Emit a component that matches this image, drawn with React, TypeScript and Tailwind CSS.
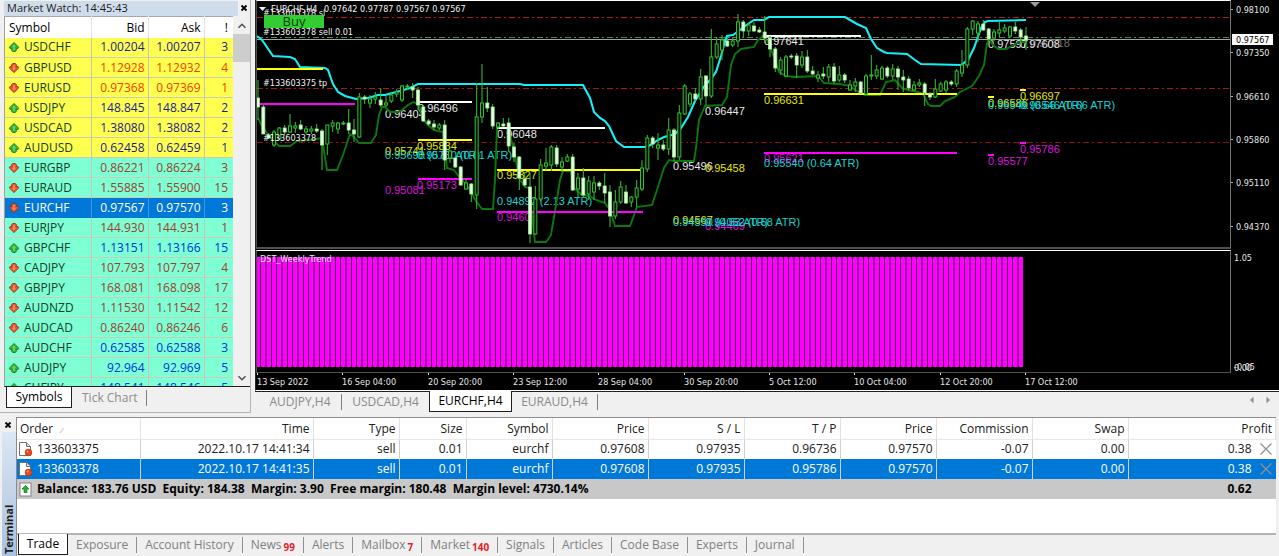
import { clsx } from 'clsx'

type Quote = { symbol: string; bid: string; ask: string; spread: number; up: boolean; group: 'major' | 'cross' }

const q = (symbol: string, bid: string, ask: string, spread: number, up: boolean, group: Quote['group'] = 'cross'): Quote => ({
  symbol,
  bid,
  ask,
  spread,
  up,
  group,
})

const quotes: Quote[] = [
  q('USDCHF', '1.00204', '1.00207', 3, true, 'major'),
  q('GBPUSD', '1.12928', '1.12932', 4, false, 'major'),
  q('EURUSD', '0.97368', '0.97369', 1, false, 'major'),
  q('USDJPY', '148.845', '148.847', 2, true, 'major'),
  q('USDCAD', '1.38080', '1.38082', 2, true, 'major'),
  q('AUDUSD', '0.62458', '0.62459', 1, true, 'major'),
  q('EURGBP', '0.86221', '0.86224', 3, false),
  q('EURAUD', '1.55885', '1.55900', 15, false),
  q('EURCHF', '0.97567', '0.97570', 3, false),
  q('EURJPY', '144.930', '144.931', 1, false),
  q('GBPCHF', '1.13151', '1.13166', 15, true),
  q('CADJPY', '107.793', '107.797', 4, false),
  q('GBPJPY', '168.081', '168.098', 17, false),
  q('AUDNZD', '1.11530', '1.11542', 12, false),
  q('AUDCAD', '0.86240', '0.86246', 6, false),
  q('AUDCHF', '0.62585', '0.62588', 3, true),
  q('AUDJPY', '92.964', '92.969', 5, true),
  q('CHFJPY', '148.541', '148.546', 5, true),
]

// [filled, body top, body bottom, high, low], one entry per H4 bar
const candles: [0 | 1, number, number, number, number][] = [
  [1, 98, 107, 80, 120], [1, 107, 134, 105, 134], [1, 135, 138, 133, 139], [0, 132, 145, 130, 147],
  [0, 128, 139, 127, 140], [1, 128, 132, 125, 135], [0, 126, 132, 114, 133], [0, 126, 128, 122, 133],
  [1, 125, 129, 120, 130], [0, 129, 132, 126, 134], [0, 129, 131, 126, 134], [1, 129, 131, 124, 133],
  [1, 131, 145, 129, 170], [0, 125, 144, 125, 155], [0, 123, 126, 120, 132], [0, 123, 129, 122, 134],
  [0, 123, 124, 121, 125], [1, 123, 130, 109, 134], [1, 130, 134, 119, 142], [0, 97, 137, 93, 138],
  [1, 97, 99, 95, 104], [0, 99, 103, 95, 108], [0, 97, 99, 92, 104], [1, 100, 105, 88, 107],
  [0, 103, 105, 96, 107], [0, 95, 101, 93, 103], [0, 92, 94, 89, 97], [0, 86, 100, 85, 102],
  [0, 86, 87, 84, 90], [1, 87, 90, 83, 98], [1, 90, 105, 87, 110], [1, 107, 121, 105, 122],
  [1, 121, 124, 119, 126], [1, 124, 127, 120, 130], [0, 125, 128, 123, 130], [1, 125, 160, 120, 170],
  [0, 151, 158, 150, 163], [1, 158, 167, 157, 168], [1, 167, 185, 166, 186], [0, 183, 189, 178, 190],
  [1, 184, 194, 183, 202], [0, 117, 195, 83, 209], [0, 103, 117, 64, 123], [1, 103, 108, 87, 112],
  [1, 107, 126, 104, 129], [0, 123, 127, 122, 129], [1, 124, 126, 118, 127], [1, 123, 146, 118, 152],
  [1, 147, 157, 143, 162], [1, 157, 178, 156, 190], [1, 179, 185, 172, 187], [1, 187, 234, 173, 243],
  [0, 199, 234, 186, 235], [0, 165, 199, 159, 201], [0, 163, 166, 148, 170], [0, 147, 165, 145, 171],
  [1, 148, 164, 145, 167], [0, 162, 167, 157, 172], [0, 157, 161, 154, 162], [1, 157, 190, 154, 191],
  [0, 178, 189, 173, 197], [1, 178, 195, 168, 198], [0, 181, 194, 176, 200], [0, 183, 192, 176, 200],
  [1, 183, 186, 181, 190], [1, 186, 193, 173, 203], [1, 192, 216, 185, 227], [0, 202, 216, 190, 219],
  [0, 187, 202, 181, 204], [1, 192, 203, 185, 204], [0, 197, 202, 196, 207], [0, 188, 197, 180, 207],
  [0, 168, 189, 160, 191], [0, 138, 169, 135, 172], [1, 138, 144, 136, 148], [0, 145, 148, 133, 160],
  [1, 145, 149, 140, 151], [0, 130, 149, 118, 155], [1, 130, 157, 128, 161], [0, 113, 157, 105, 160],
  [0, 86, 114, 84, 115], [0, 94, 104, 92, 107], [1, 94, 99, 88, 101], [0, 77, 99, 69, 105],
  [1, 76, 96, 75, 105], [0, 57, 96, 29, 98], [0, 44, 57, 37, 59], [0, 40, 50, 35, 60],
  [1, 41, 46, 38, 47], [0, 41, 45, 37, 47], [0, 22, 41, 14, 47], [1, 22, 31, 20, 37],
  [0, 25, 31, 23, 36], [1, 26, 31, 22, 32], [1, 30, 32, 27, 33], [1, 32, 38, 16, 43],
  [1, 38, 49, 36, 57], [1, 49, 68, 47, 72], [0, 60, 70, 57, 75], [0, 57, 76, 55, 77],
  [1, 56, 57, 54, 59], [1, 56, 65, 53, 78], [0, 57, 65, 51, 68], [1, 57, 71, 50, 73],
  [1, 71, 74, 66, 75], [0, 75, 78, 71, 82], [1, 74, 76, 67, 79], [0, 67, 77, 64, 82],
  [1, 67, 81, 63, 84], [0, 75, 80, 66, 82], [1, 75, 80, 73, 83], [0, 85, 90, 80, 91],
  [0, 82, 86, 78, 92], [1, 82, 93, 81, 94], [0, 76, 94, 74, 95], [0, 75, 76, 55, 80],
  [0, 70, 76, 65, 79], [0, 68, 79, 66, 80], [1, 68, 76, 66, 78], [0, 69, 76, 64, 80],
  [1, 69, 77, 66, 90], [1, 77, 80, 70, 92], [1, 79, 88, 76, 91], [0, 85, 90, 81, 91],
  [0, 83, 85, 79, 87], [1, 84, 93, 82, 106], [1, 94, 97, 92, 100], [0, 89, 97, 79, 98],
  [0, 84, 91, 82, 92], [0, 82, 90, 80, 93], [1, 82, 84, 80, 86], [0, 71, 84, 69, 87],
  [0, 65, 73, 50, 77], [0, 29, 65, 27, 68], [0, 21, 29, 20, 35], [0, 24, 33, 21, 42],
  [1, 24, 30, 20, 31], [1, 29, 39, 28, 42], [0, 32, 38, 29, 41], [0, 30, 33, 22, 37],
  [0, 28, 31, 24, 33], [0, 27, 36, 26, 38], [1, 27, 31, 22, 34], [1, 30, 37, 28, 45],
  [1, 36, 40, 27, 50],
]

const barX = (i: number) => 1 + (i * 16) / 3

const upperBand =
  '0,36 5,40 16,56 33,57 38,59 43,67 68,68 71,70 76,84 81,92 88,96 99,99 111,98 121,95 128,95 143,91 153,88 161,84 263,84 267,85 326,85 333,98 337,112 343,118 348,121 352,126 359,141 367,147 390,147 395,144 401,140 407,137 418,134 424,128 431,117 438,101 446,88 453,80 459,72 464,56 468,41 470,36 476,35 483,30 488,26 497,20 507,20 512,17 588,17 593,20 600,24 609,28 614,39 620,48 627,52 630,53 650,54 658,60 664,64 704,65 711,60 717,48 724,28 728,22 731,21 769,20'

const lowerBand =
  '1,118 5,126 13,137 22,146 33,146 40,141 53,140 65,138 70,170 80,170 86,155 93,134 97,137 102,143 114,143 119,135 122,115 125,107 128,107 133,112 141,112 145,110 151,105 156,102 162,104 165,118 171,125 177,130 186,132 190,168 197,170 203,178 209,184 213,190 219,201 225,209 236,209 238,180 240,128 250,128 253,135 258,155 262,178 268,187 272,188 275,215 278,242 289,242 294,235 299,205 303,180 306,171 314,171 317,188 325,195 333,196 339,200 348,203 353,210 358,226 373,226 377,215 380,207 395,205 400,190 407,168 412,160 417,161 437,161 439,148 442,120 448,106 465,105 470,97 474,65 478,54 484,49 497,47 501,40 506,36 511,42 517,57 522,72 529,76 538,77 561,76 567,83 583,84 593,86 598,90 608,95 623,95 629,82 638,80 646,89 661,92 666,94 671,104 674,106 683,106 688,101 698,97 703,92 715,86 722,76 727,65 730,44 732,38 735,44 741,49 749,49 755,46 762,42 769,42'

// [x1, x2, y, colour]
const levels: [number, number, number, string][] = [
  [0, 66, 69, '#ffff00'],
  [0, 98, 104, '#ff00ff'],
  [161, 215, 102, '#ffffff'],
  [161, 215, 140, '#ffff00'],
  [161, 215, 179, '#ff00ff'],
  [240, 348, 128, '#ffffff'],
  [240, 385, 170, '#ffff00'],
  [240, 386, 212, '#ff00ff'],
  [507, 604, 36, '#ffffff'],
  [507, 700, 94, '#ffff00'],
  [507, 700, 153, '#ff00ff'],
  [731, 737, 97, '#ffff00'],
  [763, 769, 90, '#ffff00'],
  [731, 737, 155, '#ff00ff'],
  [763, 769, 143, '#ff00ff'],
]

// [x, baseline, colour, text]
const levelLabels: [number, number, string, string][] = [
  [128, 118, '#e8e8e8', '0.96404'],
  [161, 112, '#e8e8e8', '0.96496'],
  [128, 155, '#e6e600', '0.95741'],
  [160, 150, '#e6e600', '0.95834'],
  [128, 159, '#14d2d2', '0.95690 (0.81 ATR)'],
  [160, 159, '#14d2d2', '0.95730 (0.61 ATR)'],
  [128, 194, '#dc14dc', '0.95081'],
  [160, 189, '#dc14dc', '0.95173'],
  [240, 138, '#e8e8e8', '0.96048'],
  [240, 179, '#e6e600', '0.95327'],
  [240, 205, '#14d2d2', '0.94892 (2.13 ATR)'],
  [240, 221, '#dc14dc', '0.94603'],
  [416, 170, '#e8e8e8', '0.95496'],
  [448, 115, '#e8e8e8', '0.96447'],
  [448, 172, '#e6e600', '0.95458'],
  [448, 230, '#dc14dc', '0.94469'],
  [416, 224, '#e6e600', '0.94567'],
  [416, 226, '#14d2d2', '0.94550 (0.53 ATR)'],
  [448, 226, '#14d2d2', '0.94052 (0.58 ATR)'],
  [507, 45, '#e8e8e8', '0.97641'],
  [507, 104, '#e6e600', '0.96631'],
  [507, 162, '#dc14dc', '0.95621'],
  [507, 167, '#14d2d2', '0.95540 (0.64 ATR)'],
  [731, 48, '#e8e8e8', '0.97597'],
  [773, 47, '#707070', '0.97618'],
  [763, 48, '#e8e8e8', '0.97608'],
  [731, 107, '#e6e600', '0.96586'],
  [731, 109, '#14d2d2', '0.96546 (0.66 ATR)'],
  [763, 100, '#e6e600', '0.96697'],
  [763, 109, '#14d2d2', '0.96546 (0.66 ATR)'],
  [763, 153, '#dc14dc', '0.95786'],
  [731, 165, '#dc14dc', '0.95577'],
]

const orderLabels: [number, string][] = [
  [16, '#133603378 sl'],
  [35, '#133603378 sell 0.01'],
  [86, '#133603375 tp'],
  [141, '#133603378'],
]

const prices: [number, string][] = [
  [9, '0.98100'],
  [52, '0.97350'],
  [96, '0.96610'],
  [139, '0.95860'],
  [182, '0.95110'],
  [226, '0.94370'],
]

const times = [
  '13 Sep 2022',
  '16 Sep 04:00',
  '20 Sep 20:00',
  '23 Sep 12:00',
  '28 Sep 04:00',
  '30 Sep 20:00',
  '5 Oct 12:00',
  '10 Oct 04:00',
  '12 Oct 20:00',
  '17 Oct 12:00',
]

const orders = [
  ['133603375', '2022.10.17 14:41:34', 'sell', '0.01', 'eurchf', '0.97608', '0.97935', '0.96736', '0.97570', '-0.07', '0.00', '0.38'],
  ['133603378', '2022.10.17 14:41:35', 'sell', '0.01', 'eurchf', '0.97608', '0.97935', '0.95786', '0.97570', '-0.07', '0.00', '0.38'],
]

const orderColumns: [string, string][] = [
  ['Order', 'w-[123px]'],
  ['Time', 'w-[173px]'],
  ['Type', 'w-[86px]'],
  ['Size', 'w-[67px]'],
  ['Symbol', 'w-[86px]'],
  ['Price', 'w-24'],
  ['S / L', 'w-24'],
  ['T / P', 'w-24'],
  ['Price', 'w-24'],
  ['Commission', 'w-24'],
  ['Swap', 'w-24'],
  ['Profit', 'w-auto'],
]

const terminalTabs: [string, string?][] = [
  ['Exposure'],
  ['Account History'],
  ['News', '99'],
  ['Alerts'],
  ['Mailbox', '7'],
  ['Market', '140'],
  ['Signals'],
  ['Articles'],
  ['Code Base'],
  ['Experts'],
  ['Journal'],
]

const TickArrow = ({ up }: { up: boolean }) => (
  <svg viewBox="0 0 12 12" className={clsx('size-3 shrink-0', !up && 'rotate-180')} aria-hidden="true">
    <path
      d="M6 1.5 L10.8 6.2 L10 7.5 L8.3 7.5 L8.3 9.5 L7.3 10.5 L4.7 10.5 L3.7 9.5 L3.7 7.5 L2 7.5 L1.2 6.2 Z"
      fill={up ? '#35b03a' : '#e8582e'}
      stroke={up ? '#1c7a24' : '#9c2c16'}
      strokeWidth="0.9"
    />
    <path d="M6 3.5 L8 5.5 L6.8 5.5 L6.8 9 L5.2 9 L5.2 5.5 L4 5.5 Z" fill={up ? '#74d868' : '#ff8a5c'} />
  </svg>
)

const CloseIcon = () => (
  <svg viewBox="0 0 8 8" className="size-2" aria-hidden="true">
    <path d="M1.5 1.5 L6.5 6.5 M6.5 1.5 L1.5 6.5" stroke="#000" strokeWidth="1.8" />
  </svg>
)

const Chevron = ({ down }: { down?: boolean }) => (
  <svg viewBox="0 0 10 8" className={clsx('h-2 w-2.5', down && 'rotate-180')} aria-hidden="true">
    <path d="M1.5 5.8 L5 2.3 L8.5 5.8" fill="none" stroke="#555" strokeWidth="1.6" />
  </svg>
)

const quoteColor = (quote: Quote, selected: boolean) => {
  if (selected) return 'text-white'
  if (quote.group === 'major') return quote.up ? 'text-[#1c1c96]' : 'text-[#f53c00]'
  return quote.up ? 'text-[#0034d8]' : 'text-[#a04030]'
}

const MarketWatch = () => (
  <aside className="flex w-[251px] shrink-0 flex-col border-r border-b border-[#b4b4b4] pl-1">
    <div className="flex h-4 items-center justify-between bg-[#f0f0f0] text-xs">
      <h2 className="mt-px h-4 flex-1 bg-[#cfdcea] pl-[3px] text-[11px] leading-3.5 text-[#1c1c1c]">Market Watch: 14:45:43</h2>
      <button aria-label="Close Market Watch" className="flex h-4 w-3 items-center justify-center">
        <CloseIcon />
      </button>
    </div>
    <div className="flex h-[371px] overflow-hidden border-b border-l border-[#202020] border-l-[#a0a0a0]">
      <div className="flex-1 overflow-hidden bg-white">
        <table className="w-full table-fixed border-collapse text-xs">
          <thead>
            <tr className="h-[21px] border-t border-[#a8a8a8] bg-white">
              <th className="w-[86px] p-0 pt-0.5 pl-1 text-left font-normal">Symbol</th>
              <th className="w-[57px] border-l border-[#e4e4e4] p-0 pt-0.5 pr-[3px] text-right font-normal">Bid</th>
              <th className="w-14 border-l border-[#e4e4e4] p-0 pt-0.5 pr-[3px] text-right font-normal">Ask</th>
              <th className="border-l border-[#e4e4e4] p-0 pt-0.5 pr-[5px] text-right font-normal">!</th>
            </tr>
          </thead>
          <tbody>
            {quotes.map((quote) => {
              const selected = quote.symbol === 'EURCHF'
              const cell = clsx(
                'border-l p-0 text-right leading-4',
                selected ? 'border-[#3c96e0]' : 'border-[#c4c4b8]',
                quoteColor(quote, selected),
              )
              return (
                <tr
                  key={quote.symbol}
                  className={clsx(
                    'h-5 border-b',
                    selected ? 'border-[#0078d7] bg-[#0078d7]' : 'border-[#c8ccb8]',
                    !selected && (quote.group === 'major' ? 'bg-[#ffff50]' : 'bg-[#7fffd4]'),
                  )}
                >
                  <td className="p-0 pl-[3px]">
                    <span className={clsx('flex items-center gap-1 leading-4', selected ? 'text-white' : 'text-[#143c28]')}>
                      <TickArrow up={quote.up} />
                      {quote.symbol}
                    </span>
                  </td>
                  <td className={clsx(cell, 'pr-[3px]')}>{quote.bid}</td>
                  <td className={clsx(cell, 'pr-[3px]')}>{quote.ask}</td>
                  <td className={clsx(cell, 'pr-[5px]')}>{quote.spread}</td>
                </tr>
              )
            })}
          </tbody>
        </table>
      </div>
      <div className="flex w-[17px] flex-col items-center bg-[#f0f0f0] pt-1.5 pb-1">
        <Chevron />
        <div className="mt-1 h-7 w-full bg-[#cdcdcd]" />
        <div className="mt-auto">
          <Chevron down />
        </div>
      </div>
    </div>
    <div className="flex h-[25px] items-start pl-0.5 text-xs">
      <button className="h-[21px] w-[66px] border-x border-b border-[#202020] bg-white text-black">Symbols</button>
      <button className="mt-[3px] h-4 border-r border-[#808080] pr-2 pl-2.5 text-[#8c8c8c]">Tick Chart</button>
    </div>
  </aside>
)

const PricePane = () => (
  <div className="relative border-t border-r border-b-2 border-l border-t-white border-r-[#707070] border-b-[#505050] border-l-[#505050]">
    <svg className="block h-[246px] w-full" role="img" aria-label="EURCHF H4 price chart">
      {/* order levels */}
      <g strokeDasharray="6 3 2 3" fill="none">
        <line x1="0" x2="100%" y1="16.5" y2="16.5" stroke="#b81c1c" />
        <line x1="0" x2="100%" y1="87.5" y2="87.5" stroke="#a81818" />
        <line x1="0" x2="100%" y1="141.5" y2="141.5" stroke="#8c1010" />
        <line x1="0" x2="100%" y1="36.5" y2="36.5" stroke="#4a8c4a" />
      </g>
      <line x1="0" x2="100%" y1="38.5" y2="38.5" stroke="#a0a8a0" />
      <path d="M773 1 H783 L778 6 Z" fill="#9a9a9a" />
      <g transform="translate(0 -2)">
        <polyline points={upperBand} transform="translate(0 1)" fill="none" stroke="#14f0f5" strokeWidth="2.1" />
        {levelLabels.map(([x, y, color, text]) => (
          <text key={`${x}-${y}-${color}`} x={x} y={y + 1} fill={color} className="font-['Liberation_Sans',sans-serif] text-[11px]">
            {text}
          </text>
        ))}
        <polyline points={lowerBand} transform="translate(0 1)" fill="none" stroke="#0a780a" strokeWidth="1.9" />
        {levels.map(([x1, x2, y, color]) => (
          <line key={`${x1}-${y}`} x1={x1} x2={x2} y1={y + 1} y2={y + 1} stroke={color} strokeWidth="2" />
        ))}
        {candles.map(([filled, top, bottom, high, low], i) => (
          <g key={i} transform={`translate(${barX(i)} 1)`}>
            <line y1={high} y2={low} stroke="#32b432" strokeWidth="1.1" />
            <rect
              x="-1.5"
              y={top}
              width="3"
              height={bottom - top}
              fill={filled ? '#e6ffe0' : '#001400'}
              stroke={filled ? '#a0f096' : '#32be32'}
              strokeWidth={filled ? 0.8 : 1}
            />
          </g>
        ))}
      </g>
      <g fill="#f0f0f0" className="font-['DejaVu_Sans_Condensed','DejaVu_Sans',sans-serif] text-[9px]">
        {orderLabels.map(([y, text]) => (
          <text key={text} x="6" y={y - 1}>
            {text}
          </text>
        ))}
        <path d="M2 6 H9 L5.5 10 Z" />
        <text x="14" y="11">
          EURCHF,H4
        </text>
        <text x="67" y="11">
          0.97642 0.97787 0.97567 0.97567
        </text>
      </g>
    </svg>
    <button className="absolute top-3.5 left-[7px] h-[13px] w-[60px] bg-[#32cd32] text-[13px] leading-[13px] text-[#0a3c0a]">
      Buy
    </button>
  </div>
)

const PriceAxis = () => (
  <svg
    className="block h-[249px] w-12 font-['DejaVu_Sans_Condensed','DejaVu_Sans',sans-serif] text-[9px]"
    role="img"
    aria-label="Price scale"
  >
    {prices.map(([y, text]) => (
      <g key={text}>
        <line x1="0" x2="2" y1={y + 0.5} y2={y + 0.5} stroke="#b0b0b0" />
        <text x="5" y={y + 4} fill="#e6e6e6">
          {text}
        </text>
      </g>
    ))}
    <rect x="1" y="34" width="41" height="11" fill="#fff" />
    <text x="5" y="43" fill="#000">
      0.97567
    </text>
  </svg>
)

const TrendPane = () => (
  <div className="mt-px border-t border-r border-b border-l border-t-white border-r-[#707070] border-b-[#505050] border-l-[#505050]">
    <svg className="block h-[121px] w-full" role="img" aria-label="Weekly trend histogram">
      {Array.from({ length: 144 }, (_, i) => (
        <rect key={i} x={(i * 16) / 3 - 1.3} y="6" width="4.6" height="110" fill="#ff00ff" />
      ))}
      <text x="3" y="11" fill="#f0e6f0" className="font-['DejaVu_Sans_Condensed','DejaVu_Sans',sans-serif] text-[9px]">
        DST_WeeklyTrend
      </text>
    </svg>
  </div>
)

const TrendAxis = () => (
  <svg
    className="mt-px block h-[123px] w-12 font-['DejaVu_Sans_Condensed','DejaVu_Sans',sans-serif] text-[9px]"
    fill="#e6e6e6"
    role="img"
    aria-label="Trend scale"
  >
    <text x="3" y="11">
      1.05
    </text>
    <text x="3" y="121">
      0.00
    </text>
    <text x="3" y="120">
      -0.05
    </text>
  </svg>
)

const ChartArea = () => (
  <main className="flex min-w-0 flex-1 flex-col">
    <div className="grid grid-cols-[1fr_48px] border-b border-l border-b-white border-l-[#282828] bg-black">
      <PricePane />
      <PriceAxis />
      <TrendPane />
      <TrendAxis />
      <svg
        className="col-span-2 block h-[17px] w-full font-['DejaVu_Sans_Condensed','DejaVu_Sans',sans-serif] text-[9px]"
        role="img"
        aria-label="Time scale"
      >
        {times.map((time, i) => (
          <g key={time} fill="#e6e6e6">
            <rect x={1 + Math.round((i * 256) / 3)} y="0" width="1" height="2" />
            <text x={1 + Math.round((i * 256) / 3)} y="12">
              {time}
            </text>
          </g>
        ))}
      </svg>
    </div>
    <div className="flex h-[21px] items-start border-t border-[#202020] text-xs text-[#8a8a8a]">
      <button className="mt-0.5 h-4 w-[87px] border-r border-[#808080] pl-1">AUDJPY,H4</button>
      <button className="mt-0.5 h-4 w-[87px]">USDCAD,H4</button>
      <button className="-mt-px h-[21px] w-[83px] border-x border-b border-[#202020] bg-white text-black">EURCHF,H4</button>
      <button className="mt-0.5 h-4 w-[86px] border-r border-[#808080]">EURAUD,H4</button>
      <div className="mt-1 mr-2 ml-auto flex gap-3">
        <button aria-label="Scroll tabs left">
          <svg viewBox="0 0 5 8" className="h-2 w-[5px]">
            <path d="M4.5 0.5 V7.5 L1 4 Z" fill="#909090" />
          </svg>
        </button>
        <button aria-label="Scroll tabs right">
          <svg viewBox="0 0 5 8" className="h-2 w-[5px]">
            <path d="M0.5 0.5 V7.5 L4 4 Z" fill="#909090" />
          </svg>
        </button>
      </div>
    </div>
  </main>
)

const OrderIcon = () => (
  <svg viewBox="0 0 15 16" className="h-4 w-[15px] shrink-0" aria-hidden="true">
    <path d="M1.5 1.5 H8.5 L12.5 5.5 V14.5 H1.5 Z" fill="#fff" stroke="#707070" />
    <path d="M8.5 1.5 V5.5 H12.5" fill="#d8d8d8" stroke="#707070" />
    <circle cx="10.5" cy="11.5" r="3.4" fill="#e04a20" stroke="#b03010" strokeWidth="0.6" />
    <circle cx="9.6" cy="10.4" r="1" fill="#ff9a70" />
  </svg>
)

const Terminal = () => (
  <section className="mt-1 flex flex-1">
    <div className="flex w-4 shrink-0 flex-col items-center">
      <button aria-label="Close Terminal" className="flex h-[15px] w-4 items-center justify-center">
        <CloseIcon />
      </button>
      <h2 className="ml-0.5 w-3.5 flex-1 rotate-180 bg-linear-to-b from-[#a9c2de] to-[#dbe7f3] pt-0.5 text-[11px] leading-3.5 font-bold text-[#1c1c1c] [writing-mode:vertical-rl]">
        Terminal
      </h2>
    </div>
    <div className="mr-[3px] flex min-w-0 flex-1 flex-col border-t border-l border-[#8c8c8c]">
      <div className="min-h-[116px] flex-1 border-b-2 border-[#b4b4b4] bg-white">
        <table className="w-full table-fixed border-collapse text-xs text-[#202020]">
          <thead>
            <tr className="h-[21px] border-b border-[#e8e8e8]">
              {orderColumns.map(([label, width], i) => (
                <th
                  key={i}
                  className={clsx(
                    width,
                    'border-r border-[#e0e0e0] py-0 pt-0.5 leading-4 font-normal',
                    i === 0 ? 'pl-[3px] text-left' : 'pr-[3px] text-right',
                  )}
                >
                  {label}
                  {i === 0 && <span className="ml-2 text-[8px] text-[#909090]">⁄</span>}
                </th>
              ))}
            </tr>
          </thead>
          <tbody>
            {orders.map((order, row) => (
              <tr key={order[0]} className={clsx('h-5', row === 1 && 'bg-[#0078d7] text-white')}>
                {order.map((value, i) => (
                  <td
                    key={i}
                    className={clsx(
                      'py-0 leading-4',
                      i < 11 && 'border-r border-[#d0d0d0]',
                      i === 0 ? 'pl-px' : i === 11 ? 'pr-1' : 'pr-[3px] text-right',
                    )}
                  >
                    {i === 0 && (
                      <span className="flex items-center gap-1">
                        <OrderIcon />
                        {value}
                      </span>
                    )}
                    {i > 0 && i < 11 && value}
                    {i === 11 && (
                      <span className="flex items-center justify-end gap-2">
                        {value}
                        <button aria-label={`Close order ${order[0]}`}>
                          <svg viewBox="0 0 12 12" className="size-3">
                            <path d="M0.5 0.5 L11.5 11.5 M11.5 0.5 L0.5 11.5" stroke="#909090" strokeWidth="1.2" />
                          </svg>
                        </button>
                      </span>
                    )}
                  </td>
                ))}
              </tr>
            ))}
            <tr className="h-5 bg-[#c8c8c8] font-bold text-black">
              <td colSpan={11} className="py-0 pl-0.5 leading-4">
                <span className="flex items-center gap-[5px] whitespace-pre">
                  <svg viewBox="0 0 13 15" className="h-[15px] w-[13px]" aria-hidden="true">
                    <rect x="1" y="1" width="11" height="13" fill="#fff" stroke="#808080" />
                    <path d="M6.5 3.5 L10 7 H8 V10.5 H5 V7 H3 Z" fill="#28b428" stroke="#14781c" strokeWidth="0.7" />
                  </svg>
                  Balance: 183.76 USD  Equity: 184.38  Margin: 3.90  Free margin: 180.48  Margin level: 4730.14%
                </span>
              </td>
              <td className="py-0 pr-6 text-right leading-4">0.62</td>
            </tr>
          </tbody>
        </table>
      </div>
      <nav className="flex h-[21px] items-start pl-px text-xs text-[#808080]">
        <button className="-mt-px h-[21px] w-[50px] border-x border-b border-[#202020] bg-white text-black">Trade</button>
        {terminalTabs.map(([label, count]) => (
          <button key={label} className="my-0.5 flex h-4 items-center border-r border-[#909090] px-2">
            {label}
            {count && <span className="mt-1.5 ml-0.5 text-[10px] font-bold text-[#e61e28]">{count}</span>}
          </button>
        ))}
      </nav>
    </div>
  </section>
)

export default function App() {
  return (
    <div className="flex min-h-screen flex-col overflow-hidden bg-[#f0f0f0] font-['Open_Sans','Noto_Sans',sans-serif]">
      <div className="flex gap-1">
        <MarketWatch />
        <ChartArea />
      </div>
      <Terminal />
    </div>
  )
}
